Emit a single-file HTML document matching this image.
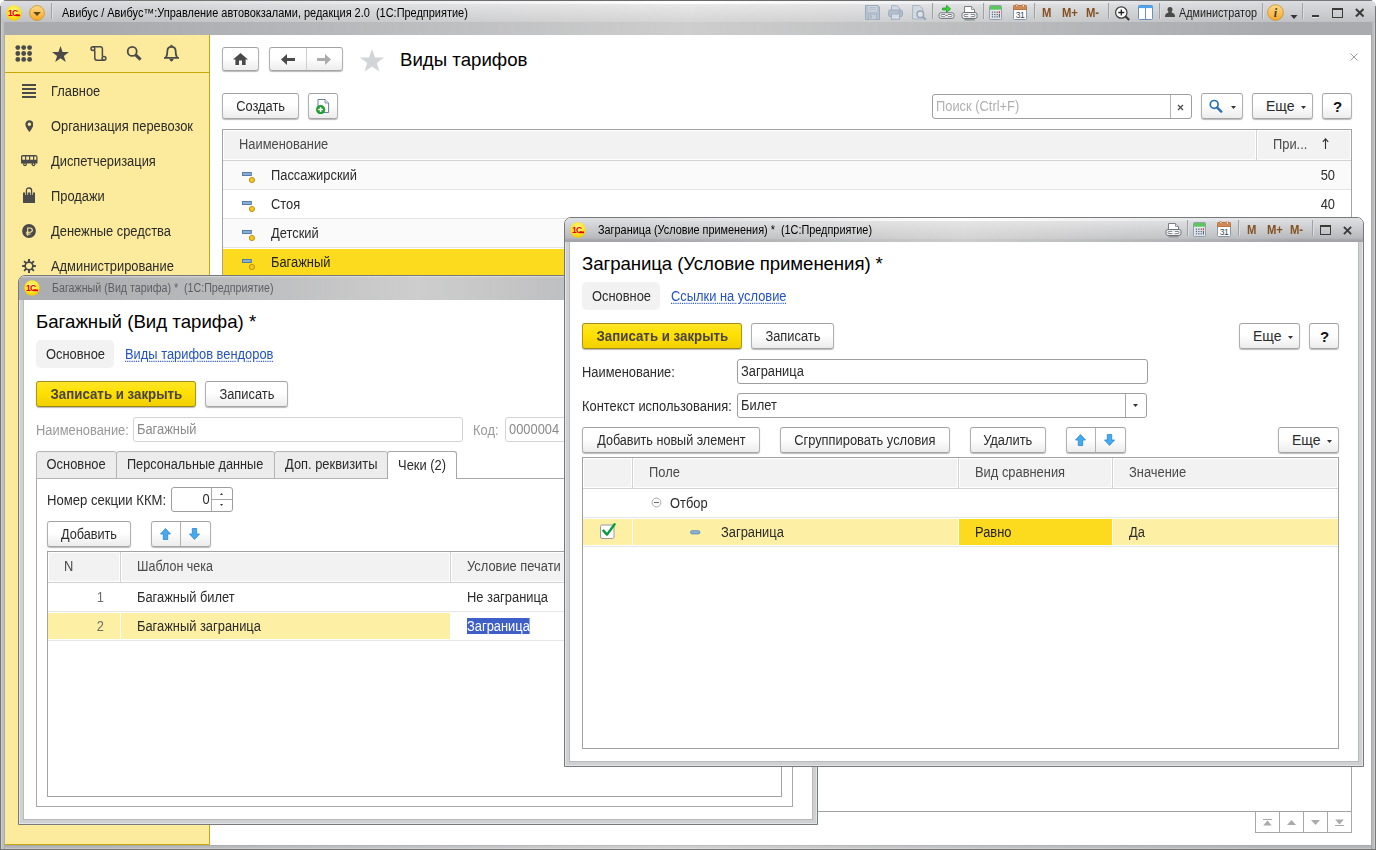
<!DOCTYPE html>
<html lang="ru"><head><meta charset="utf-8"><title>Виды тарифов</title>
<style>
html,body{margin:0;padding:0}
body{width:1376px;height:850px;overflow:hidden;position:relative;background:#fff;font-family:"Liberation Sans",Arial,sans-serif;font-size:13px;color:#2b2b2b;}
*{box-sizing:border-box}
.a{position:absolute}
.t{position:absolute;white-space:pre;line-height:16px;height:16px;font-size:14px;transform:scaleX(.92);transform-origin:0 50%}
.t.big{transform:none}
.btn.y .s{transform:scaleX(.95)}
.t.r{transform-origin:100% 50%}
.s{display:inline-block;font-size:14px;transform:scaleX(.92);transform-origin:50% 50%;white-space:pre}
.s.l{transform-origin:0 50%}
.btn{position:absolute;border:1px solid #b0b0b0;border-top-color:#a2a2a2;border-bottom-color:#a6a6a6;border-radius:3px;background:linear-gradient(#fff 45%,#ececec);box-shadow:0 1px 1px rgba(0,0,0,.28);text-align:center;font-size:13px;line-height:24px;height:26px;color:#2b2b2b;white-space:pre}
.btn.y{background:linear-gradient(#ffe62a,#ffe000 45%,#f1d000);border-color:#a38b1a #ae9518 #a08818;font-weight:bold;color:#4a4444}
.inp{position:absolute;border:1px solid #9e9e9e;border-radius:3px;background:#fff;height:25px;line-height:22px;padding-left:3px;white-space:pre}
.hdr{position:absolute;background:#f2f2f2;height:28px;line-height:27px;color:#4a4a4a;white-space:pre}
.link{color:#2353be;text-decoration:underline dotted;text-underline-offset:2px}
.win{position:absolute;z-index:0;width:800px;height:550px;border:1px solid #79797b;border-radius:7px 7px 0 0;background:#cfd0d2;overflow:hidden}
.win .body{position:absolute;left:5px;top:24px;width:788px;height:519px;background:#fff;box-shadow:0 0 0 1px #b9babc,0 0 0 4px #cfd0d2,0 0 0 5px #e3e4e5}
.wt{position:absolute;left:0;top:0;right:0;height:24px;z-index:1}
.wtxt{position:absolute;white-space:pre;font-size:12px;line-height:14px;transform-origin:0 50%;transform:scaleX(.905)}
.tab{background:#ececec;border:1px solid #b4b4b4;border-radius:3px 3px 0 0;text-align:center;line-height:25px;white-space:pre;color:#2b2b2b}
.tab.act{background:#fff;border-bottom:none;border-color:#a8a8a8;line-height:26px}
.sep{width:2px;height:16px;background:linear-gradient(90deg,#9fa1a4 50%,#dcdde0 50%)}
.mm{font-weight:bold;font-size:12.5px;line-height:14px;color:#84501f;white-space:pre;transform:scaleX(.9);transform-origin:0 50%}
.edge{-webkit-mask-image:linear-gradient(90deg,#000 0,#000 8%,transparent 50%,#000 92%,#000 100%);mask-image:linear-gradient(90deg,#000 0,#000 8%,transparent 50%,#000 92%,#000 100%)}
</style></head><body>


<svg width="0" height="0" style="position:absolute"><defs>
<radialGradient id="g1c" cx="50%" cy="35%" r="65%"><stop offset="0" stop-color="#fff59a"/><stop offset=".55" stop-color="#ffe92e"/><stop offset="1" stop-color="#f5c800"/></radialGradient>
<linearGradient id="gor" x1="0" y1="0" x2="0" y2="1"><stop offset="0" stop-color="#ffd98a"/><stop offset="1" stop-color="#f9a825"/></linearGradient>
<symbol id="logo1c" viewBox="0 0 16 16"><circle cx="8" cy="8" r="7.7" fill="url(#g1c)"/><text x="1.9" y="11.2" font-family="Liberation Sans,sans-serif" font-weight="bold" font-size="8.6" fill="#e3000f" letter-spacing="-0.6">1С</text><path d="M9.2 10.35 H14.1" stroke="#e3000f" stroke-width="1.7"/></symbol>
<symbol id="calc" viewBox="0 0 14 16"><rect x=".5" y=".5" width="13" height="15" rx="1" fill="#e4e9f0" stroke="#8a97a8"/><rect x="1" y="1" width="12" height="4" fill="#5cc85c"/><g fill="#5a6470"><rect x="3" y="7" width="1.4" height="1.4"/><rect x="5.6" y="7" width="1.4" height="1.4"/><rect x="8.2" y="7" width="1.4" height="1.4"/><rect x="3" y="9.5" width="1.4" height="1.4"/><rect x="5.6" y="9.5" width="1.4" height="1.4"/><rect x="8.2" y="9.5" width="1.4" height="1.4"/><rect x="3" y="12" width="1.4" height="1.4"/><rect x="5.6" y="12" width="1.4" height="1.4"/><rect x="8.2" y="12" width="1.4" height="1.4"/><rect x="10.6" y="9.5" width="1.2" height="3.9"/></g><rect x="10.5" y="6.6" width="1.4" height="2.2" fill="#e33"/></symbol>
<symbol id="cal" viewBox="0 0 14 16"><rect x=".5" y="1.5" width="13" height="14" rx="1" fill="#fff" stroke="#8a97a8"/><path d="M.5 2.5 Q.5 1.5 1.5 1.5 H12.5 Q13.5 1.5 13.5 2.5 V5.5 H.5Z" fill="#cf8a55" stroke="#b87440"/><rect x="3" y="0" width="1.5" height="3" fill="#fff" stroke="#b87440" stroke-width=".5"/><rect x="9.5" y="0" width="1.5" height="3" fill="#fff" stroke="#b87440" stroke-width=".5"/><text x="7" y="13.6" text-anchor="middle" font-family="Liberation Sans,sans-serif" font-size="8.5" fill="#3a4656" letter-spacing="-0.4">31</text></symbol>
<symbol id="prn2" viewBox="0 0 17 16"><path d="M3.5 8 V1.5 H10.5 L13.5 4.5 V8" fill="#fff" stroke="#7a7f86"/><path d="M10.5 1.5 V4.5 H13.5" fill="#dfe3e8" stroke="#7a7f86" stroke-width=".8"/><rect x="1" y="7.5" width="15" height="6" rx="2" fill="#f4f5f6" stroke="#6f747a"/><rect x="3" y="9.4" width="11" height="2.2" rx="1" fill="#fff" stroke="#6f747a" stroke-width=".9"/><rect x="7" y="9.2" width="3" height="2.6" fill="#f4f5f6"/><path d="M3.5 14.8 H13.5" stroke="#8d9197" stroke-width="1.4"/></symbol>
<symbol id="max" viewBox="0 0 11 10"><rect x=".5" y="1" width="10" height="8.5" fill="none" stroke="#3a3a3a" stroke-width="1"/><rect x="0" y="0" width="11" height="2" fill="#3a3a3a"/></symbol>
<symbol id="cls" viewBox="0 0 10 10"><path d="M1 1 L9 9 M9 1 L1 9" stroke="#3a3a3a" stroke-width="2.1"/></symbol>
<symbol id="aup" viewBox="0 0 11 12"><path d="M5.5 .6 L10.5 6 H7.7 V11.5 H3.3 V6 H.5Z" fill="#45abf1" stroke="#2a87d0" stroke-width=".8"/></symbol>
<symbol id="adn" viewBox="0 0 11 12"><path d="M5.5 11.4 L10.5 6 H7.7 V.5 H3.3 V6 H.5Z" fill="#45abf1" stroke="#2a87d0" stroke-width=".8"/></symbol>
<symbol id="rowi" viewBox="0 0 14 12"><rect x=".5" y=".5" width="8.8" height="3" fill="#86aed8" stroke="#4a76a4" stroke-width=".9"/><circle cx="9.9" cy="8" r="2.6" fill="#f7c81c" stroke="#b58a10" stroke-width=".9"/></symbol>
<symbol id="dd" viewBox="0 0 7 4"><path d="M0 0 H7 L3.5 4Z" fill="#333"/></symbol>
</defs></svg>

<!-- ================= MAIN WINDOW FRAME ================= -->
<div class="a" id="mainframe" style="left:0;top:0;width:1376px;height:850px;border-radius:7px 7px 0 0;overflow:hidden;background:#cecece">
 <div class="a" style="left:0;top:0;width:1376px;height:35px;background:linear-gradient(#6a6a6a 0,#6a6a6a 1px,#fff 1px,#fff 3.5px,#e8e8e8 4.5px,#d6d6d6 21.5px,#cecece 22.5px,#cecece 35px)"></div>
 <div class="a edge" style="left:0;top:0;width:1376px;height:35px;background:linear-gradient(#777 0,#777 1px,#dcdee1 1px,#d8dadd 3px,#c0c2c5 21.5px,#a9abaf 22.5px,#a9abaf 35px)"></div>
 <div class="a" style="left:0;top:845px;width:1376px;height:5px;background:linear-gradient(#bebebe 0,#bebebe 1px,#cfcfcf 1px,#cfcfcf 3px,#dedede 3px,#dedede 4px,#757575 4px)"></div>
 <div class="a edge" style="left:0;top:845px;width:1376px;height:5px;background:linear-gradient(#a6a8ab 0,#a6a8ab 1px,#b4b5b8 1px,#b4b5b8 3px,#c4c5c7 3px,#c4c5c7 4px,#757575 4px)"></div>
 <div class="a" style="left:0;top:6px;width:1px;height:30px;background:#757575"></div><div class="a" style="left:1375px;top:6px;width:1px;height:30px;background:#757575"></div>
 <div class="a" style="left:0;top:22px;width:5px;height:827px;background:linear-gradient(90deg,#757575 0,#757575 1px,#cfcfcf 1px,#cfcfcf 2px,#bebebe 2px,#bebebe 4px,#adaeb2 4px)"></div>
 <div class="a" style="left:1371px;top:22px;width:5px;height:827px;background:linear-gradient(90deg,#a8a9ac 0,#a8a9ac 1px,#b7b8ba 1px,#b9babc 3px,#cdcdcd 3px,#cdcdcd 4px,#777 4px)"></div>
</div>
<div class="a" id="maincontent" style="left:5px;top:35px;width:1366px;height:810px;background:#fff"></div>

<!-- title bar content -->
<div class="wtxt" style="left:62px;top:6px;color:#000;transform:scaleX(.913)">Авибус / Авибус™:Управление автовокзалами, редакция 2.0  (1С:Предприятие)</div>


<!-- main title icons -->
<svg class="a" style="left:6px;top:5px" width="16" height="16"><use href="#logo1c"/></svg>
<svg class="a" style="left:29px;top:5px" width="16" height="16" viewBox="0 0 16 16"><circle cx="8" cy="8" r="7.4" fill="url(#gor)" stroke="#c99a32" stroke-width=".9"/><path d="M4.2 7.1 H11.8 L8 10.9Z" fill="#5f4719"/></svg>
<div class="a sep" style="left:51px;top:3px"></div>
<!-- disabled save / print / preview -->
<svg class="a" style="left:865px;top:5px" width="15" height="15" viewBox="0 0 15 15"><path d="M.5 .5 H13 L14.5 2 V14.5 H.5Z" fill="#b7c2d0" stroke="#9eabbc"/><rect x="3" y="1" width="9" height="5.5" fill="#cdd5df"/><path d="M4 2.6H11M4 4.4H11" stroke="#a9b5c4" stroke-width=".8"/><rect x="3.5" y="9" width="8" height="5.5" fill="#c3ccd8" stroke="#a3afbf" stroke-width=".8"/><rect x="4.8" y="10.2" width="2" height="3.4" fill="#aab6c5"/></svg>
<svg class="a" style="left:888px;top:5px" width="15" height="15" viewBox="0 0 15 15"><path d="M3.5 5 V.8 H9 L11.5 3 V5" fill="#d3dae3" stroke="#a3afbf"/><rect x=".6" y="5" width="13.8" height="6.5" rx="1.5" fill="#b4bfcd" stroke="#9eabbc"/><rect x="3.5" y="9" width="8" height="5.3" fill="#d6dce4" stroke="#a3afbf"/><rect x="10.5" y="6.6" width="2" height="1" fill="#8f9db0"/></svg>
<svg class="a" style="left:912px;top:5px" width="15" height="16" viewBox="0 0 15 16"><path d="M.6 .6 H7.5 L10.8 4 V14 H.6Z" fill="#d3dae3" stroke="#a9b5c4"/><circle cx="8.3" cy="9.3" r="3.3" fill="#dfe4ea" stroke="#98a5b6" stroke-width="1.5"/><path d="M10.8 11.8 L13.8 14.8" stroke="#98a5b6" stroke-width="2"/></svg>
<div class="a sep" style="left:932px;top:3px"></div>
<svg class="a" style="left:938px;top:4px" width="17" height="17" viewBox="0 0 17 17"><path d="M4.5 4 H8.5 V1.3 L12.6 4.9 L8.5 8.5 V5.9 H4.5Z" fill="#3ed43e" stroke="#1d9a1d" stroke-width=".8" stroke-linejoin="round"/><rect x="1" y="8.8" width="15" height="5.6" rx="2" fill="#f4f5f6" stroke="#6f747a"/><rect x="3" y="10.5" width="11" height="2.2" rx="1" fill="#fff" stroke="#6f747a" stroke-width=".9"/><rect x="7" y="10.2" width="3" height="2.8" fill="#f4f5f6"/><path d="M7.2 11.6H9.8" stroke="#6f747a" stroke-width=".9"/></svg>
<svg class="a" style="left:961px;top:5px" width="17" height="16"><use href="#prn2"/></svg>
<div class="a sep" style="left:983px;top:3px"></div>
<svg class="a" style="left:989px;top:5px" width="13" height="15"><use href="#calc"/></svg>
<svg class="a" style="left:1013px;top:4px" width="14" height="16"><use href="#cal"/></svg>
<div class="a sep" style="left:1034px;top:3px"></div>
<div class="a mm" style="left:1042px;top:6px">M</div>
<div class="a mm" style="left:1062px;top:6px">M+</div>
<div class="a mm" style="left:1086px;top:6px">M-</div>
<div class="a sep" style="left:1108px;top:3px"></div>
<svg class="a" style="left:1114px;top:5px" width="17" height="17" viewBox="0 0 17 17"><path d="M11.3 11.3 L15.2 15" stroke="#3a3a3a" stroke-width="2.2"/><circle cx="7.3" cy="7.5" r="5.7" fill="#fff" stroke="#3a3a3a" stroke-width="1.2"/><path d="M4.3 7.5 H10.3 M7.3 4.5 V10.5" stroke="#222" stroke-width="1.3"/></svg>
<svg class="a" style="left:1138px;top:5px" width="15" height="15" viewBox="0 0 15 15"><rect x=".5" y=".5" width="14" height="14" rx="1" fill="#fff" stroke="#6d8fb8"/><rect x=".5" y=".5" width="14" height="2.6" fill="#4da3ee"/><path d="M7.5 3 V14.5" stroke="#6d8fb8" stroke-width="1"/></svg>
<div class="a sep" style="left:1159px;top:3px"></div>
<svg class="a" style="left:1165px;top:7px" width="10" height="10" viewBox="0 0 10 10" fill="#4a4a4a"><circle cx="5" cy="2.6" r="2.5"/><path d="M0 10 Q0 6.2 3 5.8 L3.6 4.6 H6.4 L7 5.8 Q10 6.2 10 10Z"/></svg>
<div class="wtxt" style="left:1179px;top:6px;color:#222;transform:scaleX(.9)">Администратор</div>
<div class="a sep" style="left:1262px;top:3px"></div>
<svg class="a" style="left:1267px;top:4px" width="17" height="17" viewBox="0 0 17 17"><circle cx="8.5" cy="8.5" r="7.8" fill="url(#gor)" stroke="#c9962e" stroke-width=".9"/><text x="8.4" y="12.6" text-anchor="middle" font-family="Liberation Serif,serif" font-weight="bold" font-style="italic" font-size="12" fill="#3a3a3a">i</text></svg>
<svg class="a" style="left:1290px;top:15px" width="8" height="4"><use href="#dd"/></svg>
<div class="a sep" style="left:1302px;top:3px"></div>
<div class="a" style="left:1311.5px;top:15px;width:7.5px;height:2px;background:#3a3a3a;box-shadow:0 1px 0 rgba(255,255,255,.5)"></div>
<svg class="a" style="left:1332px;top:8px" width="11" height="10"><use href="#max"/></svg>
<svg class="a" style="left:1354.5px;top:8px" width="9.5" height="9.5"><use href="#cls"/></svg>

<!-- ================= SIDEBAR ================= -->
<div class="a" id="sidebar" style="left:5px;top:35px;width:205px;height:810px;background:#fceb9c;border-right:1px solid #c8a70c;border-bottom:1px solid #c8a70c"></div>
<div class="a" style="left:5px;top:72px;width:204px;height:1px;background:#c8a70c"></div>
<div class="t" style="left:51px;top:83px">Главное</div>
<div class="t" style="left:51px;top:118px">Организация перевозок</div>
<div class="t" style="left:51px;top:153px">Диспетчеризация</div>
<div class="t" style="left:51px;top:188px">Продажи</div>
<div class="t" style="left:51px;top:223px">Денежные средства</div>
<div class="t" style="left:51px;top:258px">Администрирование</div>


<!-- sidebar icons -->
<svg class="a" style="left:14px;top:44px" width="20" height="20" viewBox="0 0 20 20" fill="#4a4a4a"><circle cx="3.8" cy="3.6" r="2.4"/><circle cx="9.7" cy="3.6" r="2.4"/><circle cx="15.6" cy="3.6" r="2.4"/><circle cx="3.8" cy="9.5" r="2.4"/><circle cx="9.7" cy="9.5" r="2.4"/><circle cx="15.6" cy="9.5" r="2.4"/><circle cx="3.8" cy="15.4" r="2.4"/><circle cx="9.7" cy="15.4" r="2.4"/><circle cx="15.6" cy="15.4" r="2.4"/></svg>
<svg class="a" style="left:52px;top:46px" width="17" height="16" viewBox="0 0 17 16" fill="#4a4a4a"><path d="M8.5 0 L10.6 6 L17 6.1 L11.9 9.9 L13.8 16 L8.5 12.3 L3.2 16 L5.1 9.9 L0 6.1 L6.4 6Z"/></svg>
<svg class="a" style="left:89.5px;top:45px" width="17" height="17" viewBox="0 0 17 17" fill="none" stroke="#4a4a4a" stroke-width="1.5"><circle cx="2.9" cy="3.6" r="1.9"/><circle cx="14" cy="13.3" r="1.9"/><path d="M2.9 1.7 H10.2 Q12.4 1.7 12.4 3.9 V11.4 M4.8 5.2 V13.1 Q4.8 15.2 6.9 15.2 H14"/></svg>
<svg class="a" style="left:126px;top:45px" width="17" height="17" viewBox="0 0 17 17" fill="none" stroke="#4a4a4a"><circle cx="6.2" cy="6.4" r="4.5" stroke-width="1.8"/><path d="M9.6 9.8 L14.6 14.6" stroke-width="3"/></svg>
<svg class="a" style="left:163px;top:44px" width="17" height="19" viewBox="0 0 17 19" fill="none" stroke="#4a4a4a" stroke-width="1.8"><path d="M1 13.8 H16 M3 13.5 Q4.4 11 4.4 7 Q4.4 2.8 8.5 2.8 Q12.6 2.8 12.6 7 Q12.6 11 14 13.5"/><path d="M6.8 15.5 L8.5 17.3 L10.2 15.5Z M7.6 2.2 L8.5 0.9 L9.4 2.2Z" fill="#4a4a4a" stroke-width="1"/></svg>
<!-- menu icons -->
<svg class="a" style="left:22px;top:84px" width="14" height="14" viewBox="0 0 14 14" fill="#4a4a4a"><rect y="0" width="14" height="2"/><rect y="4" width="14" height="2"/><rect y="8" width="14" height="2"/><rect y="12" width="14" height="2"/></svg>
<svg class="a" style="left:24.6px;top:120px" width="8.8" height="12" viewBox="0 0 10 13.6" fill="#4a4a4a"><path d="M5 0.2 C2.3 0.2 0.4 2.2 0.4 4.8 C0.4 8 5 13.6 5 13.6 C5 13.6 9.6 8 9.6 4.8 C9.6 2.2 7.7 0.2 5 0.2Z M5 2.9 A2 2 0 1 1 5 6.9 A2 2 0 1 1 5 2.9Z" fill-rule="evenodd"/></svg>
<svg class="a" style="left:21px;top:155px" width="17" height="12" viewBox="0 0 17 12" fill="#4a4a4a"><path d="M1.5 0 H14.5 Q16.5 0 16.5 2 V8.5 H0 V1.5 Q0 0 1.5 0Z M1.3 1.6 V4.8 H4 V1.6Z M5.2 1.6 V4.8 H8 V1.6Z M9.2 1.6 V4.8 H12 V1.6Z M13.2 1.6 V4.8 H15.3 V1.6Z" fill-rule="evenodd"/><circle cx="4" cy="9.3" r="1.9"/><circle cx="12.5" cy="9.3" r="1.9"/><circle cx="4" cy="9.3" r="0.7" fill="#fceb9c"/><circle cx="12.5" cy="9.3" r="0.7" fill="#fceb9c"/></svg>
<svg class="a" style="left:23px;top:187px" width="12" height="16" viewBox="0 0 12 16"><path d="M0 5.5 H12 V16 H0Z" fill="#4a4a4a"/><path d="M3.4 8 V3.6 Q3.4 1 6 1 Q8.6 1 8.6 3.6 V8" fill="none" stroke="#fceb9c" stroke-width="2.6"/><path d="M3.4 8 V3.6 Q3.4 1 6 1 Q8.6 1 8.6 3.6 V8" fill="none" stroke="#4a4a4a" stroke-width="1.3"/><rect x="0" y="0" width="12" height="0" /></svg>
<svg class="a" style="left:22px;top:224px" width="14" height="14" viewBox="0 0 14 14"><circle cx="7" cy="7" r="6.9" fill="#4a4a4a"/><path d="M5.7 11.7 V4 H8.1 Q10.3 4 10.3 6.1 Q10.3 8.2 8.1 8.2 H3.9 M3.9 10 H8.6" fill="none" stroke="#fceb9c" stroke-width="1.1"/></svg>
<svg class="a" style="left:22px;top:259px" width="14" height="14" viewBox="0 0 14 14"><g stroke="#4a4a4a" stroke-width="2"><path d="M7 0.1V13.9M0.1 7H13.9M2.1 2.1L11.9 11.9M11.9 2.1L2.1 11.9"/></g><circle cx="7" cy="7" r="4.7" fill="#4a4a4a"/><circle cx="7" cy="7" r="3" fill="#fceb9c"/></svg>

<!-- ================= MAIN LIST FORM ================= -->
<div class="btn" style="left:222px;top:47px;width:37px;height:24px"></div>
<div class="btn" style="left:269px;top:47px;width:74px;height:24px"></div>
<div class="a" style="left:306px;top:48px;width:1px;height:22px;background:#cfcfcf"></div>
<div class="t big" style="left:400px;top:49px;font-size:18.67px;line-height:22px;height:22px;color:#000">Виды тарифов</div>
<div class="btn" style="left:222px;top:93px;width:77px"><span class="s">Создать</span></div>
<div class="btn" style="left:308px;top:93px;width:30px"></div>
<div class="inp" style="left:932px;top:94px;width:260px;color:#b0b0b0"><span class="s l">Поиск (Ctrl+F)</span></div>
<div class="btn" style="left:1201px;top:93px;width:42px"></div>
<div class="btn" style="left:1252px;top:93px;width:61px;text-align:left;padding-left:13px"><span class="s l" style="transform:none">Еще</span></div>
<div class="btn" style="left:1322px;top:93px;width:30px;font-weight:bold;color:#111"><span class="s" style="font-size:15px;transform:none;position:relative;top:1px;left:.5px">?</span></div>

<!-- table -->
<div class="a" style="left:222px;top:129px;width:1130px;height:683px;border:1px solid #a2a2a2;background:#fff"></div>
<div class="hdr" style="left:224px;top:131px;width:1031px;padding-left:15px"><span class="s l">Наименование</span></div>
<div class="hdr" style="left:1258px;top:131px;width:92px;padding-left:15px"><span class="s l">При...</span></div>
<div class="a" style="left:1256px;top:130px;width:1px;height:30px;background:#d2d2d2"></div>
<div class="a" style="left:223px;top:160px;width:1128px;height:1px;background:#d2d2d2"></div>
<div class="a" style="left:223px;top:161px;width:1128px;height:28px;background:#fafafa"></div>
<div class="a" style="left:223px;top:219px;width:1128px;height:28px;background:#fafafa"></div>
<div class="a" style="left:223px;top:189px;width:1128px;height:1px;background:#e4e4e4"></div>
<div class="a" style="left:223px;top:218px;width:1128px;height:1px;background:#e4e4e4"></div>
<div class="a" style="left:223px;top:247px;width:1128px;height:1px;background:#e4e4e4"></div>
<div class="a" style="left:223px;top:249px;width:1128px;height:27px;background:#fcdb1f"></div>
<div class="t" style="left:271px;top:167px">Пассажирский</div>
<div class="t" style="left:271px;top:196px">Стоя</div>
<div class="t" style="left:271px;top:225px">Детский</div>
<div class="t" style="left:271px;top:254px;color:#222">Багажный</div>
<div class="t r" style="left:1300px;top:167px;width:35px;text-align:right">50</div>
<div class="t r" style="left:1300px;top:196px;width:35px;text-align:right">40</div>

<!-- scroll buttons -->
<div class="a" style="left:1255px;top:812px;width:97px;height:21px;border:1px solid #a8a8a8;border-top:none;background:#fff"></div>
<div class="a" style="left:1279px;top:812px;width:1px;height:20px;background:#a8a8a8"></div>
<div class="a" style="left:1303px;top:812px;width:1px;height:20px;background:#a8a8a8"></div>
<div class="a" style="left:1327px;top:812px;width:1px;height:20px;background:#a8a8a8"></div>


<!-- main form icons -->
<svg class="a" style="left:233px;top:53px" width="15" height="12" viewBox="0 0 15 12" fill="#4a4a4a"><path d="M7.5 0 L15 6.6 H12.6 V12 H9 V7.4 H6 V12 H2.4 V6.6 H0Z"/></svg>
<svg class="a" style="left:281px;top:54px" width="14" height="11" viewBox="0 0 14 11" fill="#4a4a4a"><path d="M0 5.5 L6 0 V4 H14 V7 H6 V11Z"/></svg>
<svg class="a" style="left:317px;top:54px" width="14" height="11" viewBox="0 0 14 11" fill="#ababab"><path d="M14 5.5 L8 0 V4 H0 V7 H8 V11Z"/></svg>
<svg class="a" style="left:360px;top:49px" width="24" height="23" viewBox="0 0 24 23" fill="#d2d5d8"><path d="M12 0 L15 8.4 L24 8.6 L16.8 14 L19.4 22.6 L12 17.5 L4.6 22.6 L7.2 14 L0 8.6 L9 8.4Z"/></svg>
<svg class="a" style="left:1350px;top:53px" width="8" height="8" viewBox="0 0 8 8"><path d="M.5 .5 L7.5 7.5 M7.5 .5 L.5 7.5" stroke="#9c9c9c" stroke-width="1"/></svg>
<svg class="a" style="left:316px;top:98px" width="14" height="16" viewBox="0 0 14 16"><path d="M2 1.5 H9 L12.6 5 V14.5 H2Z" fill="#fff" stroke="#6b7f99"/><path d="M9 1.5 V5 H12.6" fill="#e6ebf2" stroke="#6b7f99" stroke-width=".8"/><circle cx="4.6" cy="11.6" r="4.3" fill="#1fa32f" stroke="#148a22" stroke-width=".6"/><path d="M2.2 11.6 H7 M4.6 9.2 V14" stroke="#fff" stroke-width="1.5"/></svg>
<div class="a" style="left:1170px;top:95px;width:1px;height:23px;background:#b5b5b5"></div>
<svg class="a" style="left:1177px;top:104px" width="7" height="7" viewBox="0 0 7 7"><path d="M1 1 L6 6 M6 1 L1 6" stroke="#4a4a4a" stroke-width="1.25"/></svg>
<svg class="a" style="left:1209px;top:99px" width="14" height="14" viewBox="0 0 14 14" fill="none" stroke="#2a6fb0"><circle cx="5.2" cy="5.4" r="3.9" stroke-width="1.7"/><path d="M8.2 8.6 L12.2 12.6" stroke-width="2.4" stroke-linecap="round"/></svg>
<svg class="a" style="left:1231px;top:106px" width="5" height="3"><use href="#dd"/></svg>
<svg class="a" style="left:1301px;top:106px" width="5" height="3"><use href="#dd"/></svg>
<!-- row icons -->
<svg class="a ri" style="left:242px;top:172px" width="14" height="12"><use href="#rowi"/></svg>
<svg class="a ri" style="left:242px;top:201px" width="14" height="12"><use href="#rowi"/></svg>
<svg class="a ri" style="left:242px;top:230px" width="14" height="12"><use href="#rowi"/></svg>
<svg class="a ri" style="left:242px;top:259px" width="14" height="12"><use href="#rowi"/></svg>
<!-- sort arrow -->
<svg class="a" style="left:1322px;top:138px" width="7" height="11" viewBox="0 0 7 11"><path d="M3.5 1 V11 M.8 3.8 L3.5 .8 L6.2 3.8" fill="none" stroke="#333" stroke-width="1.1"/></svg>
<!-- scroll icons -->
<svg class="a" style="left:1263px;top:819px" width="9" height="7" viewBox="0 0 9 7" fill="#aaa"><rect x="0" y="0" width="9" height="1"/><path d="M4.5 1.6 L8.8 6.4 H.2Z"/></svg>
<svg class="a" style="left:1287px;top:820px" width="9" height="5" viewBox="0 0 9 5" fill="#aaa"><path d="M4.5 0 L9 5 H0Z"/></svg>
<svg class="a" style="left:1311px;top:820px" width="9" height="5" viewBox="0 0 9 5" fill="#aaa"><path d="M4.5 5 L9 0 H0Z"/></svg>
<svg class="a" style="left:1335px;top:819px" width="9" height="7" viewBox="0 0 9 7" fill="#aaa"><rect x="0" y="6" width="9" height="1"/><path d="M4.5 5.4 L8.8 .6 H.2Z"/></svg>

<!-- ================= WINDOW 2 : Багажный ================= -->
<div class="win" id="win2" style="left:18px;top:275px">
 <div class="wt" style="background:linear-gradient(#e0e0e0 0,#e0e0e0 1px,#cecece 1px,#cecece 24px)"></div>
 <div class="wt edge" style="background:linear-gradient(#c6c8cb 0,#c6c8cb 1px,#abadb0 2px,#abadb0 24px)"></div>
 <div class="body"></div>
</div>
<div class="wtxt" style="left:52px;top:281px;color:#5c5e62;transform:scaleX(.89)">Багажный (Вид тарифа) *  (1С:Предприятие)</div>

<!-- win2 content -->
<div class="t big" style="left:36px;top:311px;font-size:18.67px;line-height:22px;height:22px;color:#000">Багажный (Вид тарифа) *</div>
<div class="a" style="left:36px;top:340px;width:78px;height:28px;background:#f2f2f2;border-radius:5px"></div>
<div class="t" style="left:46px;top:346px">Основное</div>
<div class="t link" style="left:125px;top:346px">Виды тарифов вендоров</div>
<div class="btn y" style="left:36px;top:381px;width:160px"><span class="s">Записать и закрыть</span></div>
<div class="btn" style="left:205px;top:381px;width:83px"><span class="s">Записать</span></div>
<div class="t" style="left:36px;top:422px;color:#999">Наименование:</div>
<div class="inp" style="left:133px;top:417px;width:330px;border-color:#d4d4d4;color:#8a8a8a"><span class="s l">Багажный</span></div>
<div class="t" style="left:473px;top:422px;color:#999">Код:</div>
<div class="inp" style="left:505px;top:417px;width:80px;border-color:#d4d4d4;color:#8a8a8a"><span class="s l">0000004</span></div>
<!-- tabs -->
<div class="a" style="left:36px;top:478px;width:757px;height:329px;border:1px solid #a8a8a8;background:#fff"></div>
<div class="a tab" style="left:36px;top:451px;width:81px;height:28px"><span class="s">Основное</span></div>
<div class="a tab" style="left:116px;top:451px;width:159px;height:28px"><span class="s" style="transform:scaleX(.907)">Персональные данные</span></div>
<div class="a tab" style="left:274px;top:451px;width:114px;height:28px"><span class="s">Доп. реквизиты</span></div>
<div class="a tab act" style="left:387px;top:451px;width:70px;height:28px"><span class="s">Чеки (2)</span></div>
<div class="t" style="left:47px;top:492px;transform:scaleX(.936)">Номер секции ККМ:</div>
<div class="inp" style="left:171px;top:487px;width:62px;text-align:right;padding-right:22px"><span class="s l" style="transform-origin:100% 50%">0</span></div>
<div class="a" style="left:211px;top:488px;width:1px;height:23px;background:#a9a9a9"></div>
<div class="a" style="left:212px;top:499px;width:20px;height:1px;background:#a9a9a9"></div>
<div class="btn" style="left:47px;top:521px;width:84px"><span class="s" style="transform:scaleX(.905)">Добавить</span></div>
<div class="btn" style="left:151px;top:521px;width:60px"></div>
<div class="a" style="left:180px;top:522px;width:1px;height:24px;background:#b2b2b2"></div>
<!-- table -->
<div class="a" style="left:47px;top:551px;width:735px;height:246px;border:1px solid #a2a2a2;background:#fff"></div>
<div class="hdr" style="left:49px;top:553px;width:70px;padding-left:15px"><span class="s l">N</span></div>
<div class="hdr" style="left:122px;top:553px;width:327px;padding-left:15px"><span class="s l" style="transform:scaleX(.893)">Шаблон чека</span></div>
<div class="hdr" style="left:452px;top:553px;width:328px;padding-left:15px"><span class="s l">Условие печати</span></div>
<div class="a" style="left:120px;top:552px;width:1px;height:30px;background:#d2d2d2"></div>
<div class="a" style="left:450px;top:552px;width:1px;height:30px;background:#d2d2d2"></div>
<div class="a" style="left:48px;top:582px;width:733px;height:1px;background:#d2d2d2"></div>
<div class="a" style="left:48px;top:611px;width:733px;height:1px;background:#e6e6e6"></div>
<div class="a" style="left:48px;top:640px;width:733px;height:1px;background:#e6e6e6"></div>
<div class="a" style="left:48px;top:613px;width:72px;height:26px;background:#fdf0a5"></div>
<div class="a" style="left:121px;top:613px;width:329px;height:26px;background:#fdf0a5"></div>
<div class="t r" style="left:60px;top:589px;width:44px;text-align:right;color:#6e6e6e">1</div>
<div class="t r" style="left:60px;top:618px;width:44px;text-align:right;color:#6e6e6e">2</div>
<div class="t" style="left:137px;top:589px">Багажный билет</div>
<div class="t" style="left:137px;top:618px">Багажный заграница</div>
<div class="t" style="left:467px;top:589px">Не заграница</div>
<div class="t" style="left:467px;top:618px;background:#3f5fc8;color:#fff">Заграница</div>


<!-- win2 icons -->
<svg class="a" style="left:24px;top:280px" width="16" height="16"><use href="#logo1c"/></svg>
<svg class="a" style="left:160px;top:528px" width="11" height="12"><use href="#aup"/></svg>
<svg class="a" style="left:189px;top:528px" width="11" height="12"><use href="#adn"/></svg>
<svg class="a" style="left:220px;top:493px" width="3" height="2" viewBox="0 0 3 2"><path d="M0 2 H3 L1.5 0Z" fill="#333"/></svg>
<svg class="a" style="left:220px;top:504px" width="3" height="2" viewBox="0 0 3 2"><path d="M0 0 H3 L1.5 2Z" fill="#333"/></svg>

<!-- ================= WINDOW 3 : Заграница ================= -->
<div class="win" id="win3" style="left:564px;top:217px">
 <div class="wt" style="background:linear-gradient(#fff 0,#fff 2.5px,#e5e5e5 3.5px,#d4d4d4 20.5px,#cdcdcd 21.5px,#cdcdcd 24px)"></div>
 <div class="wt edge" style="background:linear-gradient(#dfe0e2 0,#dcdde0 2px,#b7b9bc 20px,#a3a5a9 22px,#a3a5a9 24px)"></div>
 <div class="body"></div>
</div>
<div class="wtxt" style="left:598px;top:223px;color:#000">Заграница (Условие применения) *  (1С:Предприятие)</div>


<!-- win3 content -->
<div class="t big" style="left:582px;top:253px;letter-spacing:-0.1px;font-size:18.67px;line-height:22px;height:22px;color:#000">Заграница (Условие применения) *</div>
<div class="a" style="left:582px;top:282px;width:78px;height:28px;background:#f2f2f2;border-radius:5px"></div>
<div class="t" style="left:592px;top:288px">Основное</div>
<div class="t link" style="left:671px;top:288px">Ссылки на условие</div>
<div class="btn y" style="left:582px;top:323px;width:160px"><span class="s">Записать и закрыть</span></div>
<div class="btn" style="left:751px;top:323px;width:83px"><span class="s">Записать</span></div>
<div class="btn" style="left:1239px;top:323px;width:61px;text-align:left;padding-left:13px"><span class="s l" style="transform:none">Еще</span></div>
<div class="btn" style="left:1309px;top:323px;width:30px;font-weight:bold;color:#111"><span class="s" style="font-size:15px;transform:none;position:relative;top:1px;left:.5px">?</span></div>
<div class="t" style="left:582px;top:364px">Наименование:</div>
<div class="inp" style="left:737px;top:359px;width:411px"><span class="s l">Заграница</span></div>
<div class="t" style="left:582px;top:398px">Контекст использования:</div>
<div class="inp" style="left:737px;top:393px;width:410px"><span class="s l">Билет</span></div>
<div class="a" style="left:1125px;top:394px;width:1px;height:23px;background:#a9a9a9"></div>
<div class="btn" style="left:582px;top:427px;width:178px"><span class="s" style="transform:scaleX(.9)">Добавить новый элемент</span></div>
<div class="btn" style="left:780px;top:427px;width:170px"><span class="s">Сгруппировать условия</span></div>
<div class="btn" style="left:970px;top:427px;width:76px"><span class="s">Удалить</span></div>
<div class="btn" style="left:1066px;top:427px;width:60px"></div>
<div class="a" style="left:1095px;top:428px;width:1px;height:24px;background:#b2b2b2"></div>
<div class="btn" style="left:1278px;top:427px;width:61px;text-align:left;padding-left:13px"><span class="s l" style="transform:none">Еще</span></div>
<!-- table -->
<div class="a" style="left:582px;top:457px;width:757px;height:292px;border:1px solid #a2a2a2;background:#fff"></div>
<div class="hdr" style="left:584px;top:459px;width:47px;padding-left:15px"></div>
<div class="hdr" style="left:634px;top:459px;width:323px;padding-left:15px"><span class="s l">Поле</span></div>
<div class="hdr" style="left:960px;top:459px;width:151px;padding-left:15px"><span class="s l">Вид сравнения</span></div>
<div class="hdr" style="left:1114px;top:459px;width:223px;padding-left:15px"><span class="s l">Значение</span></div>
<div class="a" style="left:632px;top:458px;width:1px;height:30px;background:#d2d2d2"></div>
<div class="a" style="left:958px;top:458px;width:1px;height:30px;background:#d2d2d2"></div>
<div class="a" style="left:1112px;top:458px;width:1px;height:30px;background:#d2d2d2"></div>
<div class="a" style="left:583px;top:488px;width:755px;height:1px;background:#d2d2d2"></div>
<div class="a" style="left:583px;top:517px;width:755px;height:1px;background:#e6e6e6"></div>
<div class="a" style="left:583px;top:546px;width:755px;height:1px;background:#e6e6e6"></div>
<div class="a" style="left:583px;top:519px;width:49px;height:26px;background:#fdf0a5"></div>
<div class="a" style="left:633px;top:519px;width:325px;height:26px;background:#fdf0a5"></div>
<div class="a" style="left:959px;top:519px;width:153px;height:26px;background:#fcdb1f"></div>
<div class="a" style="left:1113px;top:519px;width:225px;height:26px;background:#fdf0a5"></div>
<div class="t" style="left:670px;top:495px">Отбор</div>
<div class="t" style="left:721px;top:524px">Заграница</div>
<div class="t" style="left:975px;top:524px;color:#222">Равно</div>
<div class="t" style="left:1129px;top:524px">Да</div>

<!-- win3 title icons -->
<svg class="a" style="left:570px;top:222px" width="16" height="16"><use href="#logo1c"/></svg>
<svg class="a" style="left:1165px;top:222px" width="17" height="16"><use href="#prn2"/></svg>
<div class="a sep" style="left:1187px;top:220px"></div>
<svg class="a" style="left:1193px;top:222px" width="13" height="15"><use href="#calc"/></svg>
<svg class="a" style="left:1217px;top:221px" width="14" height="16"><use href="#cal"/></svg>
<div class="a sep" style="left:1238px;top:220px"></div>
<div class="a mm" style="left:1247px;top:223px">M</div>
<div class="a mm" style="left:1267px;top:223px">M+</div>
<div class="a mm" style="left:1290px;top:223px">M-</div>
<div class="a sep" style="left:1312px;top:220px"></div>
<svg class="a" style="left:1320px;top:225px" width="11" height="10"><use href="#max"/></svg>
<svg class="a" style="left:1343px;top:225.5px" width="9" height="9"><use href="#cls"/></svg>
<!-- win3 content icons -->
<svg class="a" style="left:1288px;top:336px" width="5" height="3"><use href="#dd"/></svg>
<svg class="a" style="left:1327px;top:440px" width="5" height="3"><use href="#dd"/></svg>
<svg class="a" style="left:1133px;top:404px" width="5" height="3"><use href="#dd"/></svg>
<svg class="a" style="left:1075px;top:434px" width="11" height="12"><use href="#aup"/></svg>
<svg class="a" style="left:1104px;top:434px" width="11" height="12"><use href="#adn"/></svg>
<svg class="a" style="left:651px;top:497px" width="11" height="11" viewBox="0 0 11 11"><circle cx="5.5" cy="5.5" r="4.4" fill="#fff" stroke="#a0a0a0" stroke-width=".9"/><path d="M2.9 5.5 H8.1" stroke="#707070" stroke-width="1.1"/></svg>
<svg class="a" style="left:690px;top:530px" width="11" height="5" viewBox="0 0 11 5"><rect x=".5" y=".7" width="9.4" height="3.2" rx="1.5" fill="#8fb3d6" stroke="#5a82ab" stroke-width=".8"/></svg>
<svg class="a" style="left:599px;top:521px" width="18" height="19" viewBox="0 0 18 19"><rect x="1.5" y="4" width="13.5" height="13.5" rx="1.5" fill="#fff" stroke="#9a9a9a"/><path d="M4.4 9.6 L8 13.6 L15.6 3.2" fill="none" stroke="#0a9a3c" stroke-width="2.4" stroke-linecap="round" stroke-linejoin="round"/></svg>
</body></html>
